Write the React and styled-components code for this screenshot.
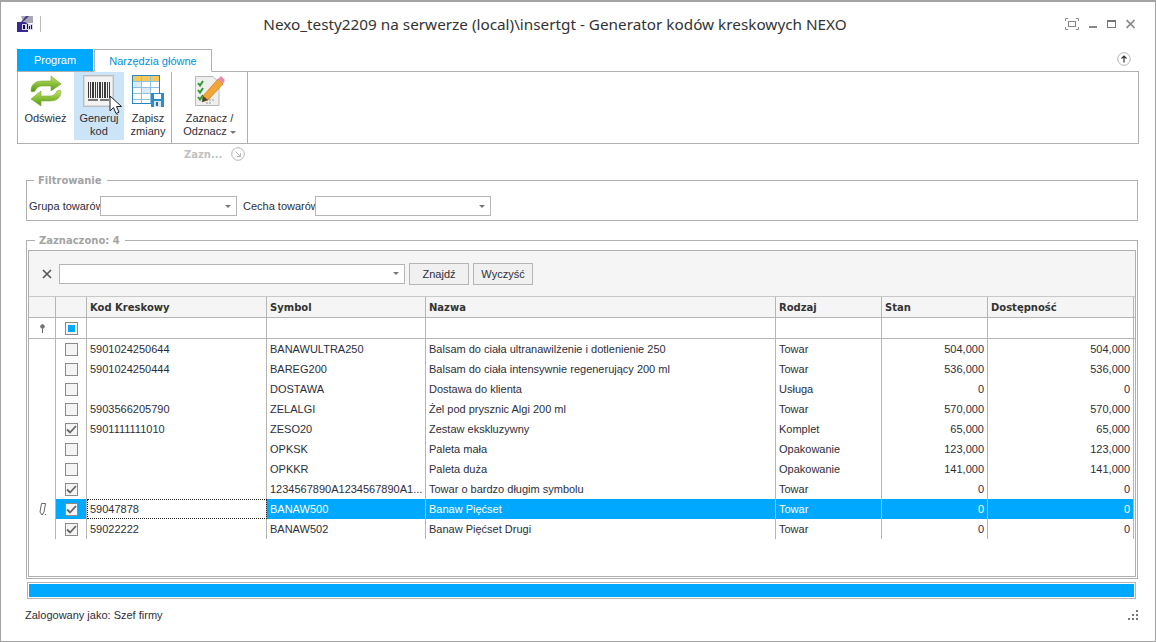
import styled, { createGlobalStyle } from 'styled-components';

const rows = [
  { code: '5901024250644', symbol: 'BANAWULTRA250', name: 'Balsam do ciała ultranawilżenie i dotlenienie 250', kind: 'Towar', stock: '504,000', avail: '504,000' },
  { code: '5901024250444', symbol: 'BAREG200', name: 'Balsam do ciała intensywnie regenerujący 200 ml', kind: 'Towar', stock: '536,000', avail: '536,000' },
  { code: '', symbol: 'DOSTAWA', name: 'Dostawa do klienta', kind: 'Usługa', stock: '0', avail: '0' },
  { code: '5903566205790', symbol: 'ZELALGI', name: 'Żel pod prysznic Algi 200 ml', kind: 'Towar', stock: '570,000', avail: '570,000' },
  { code: '5901111111010', symbol: 'ZESO20', name: 'Zestaw ekskluzywny', kind: 'Komplet', stock: '65,000', avail: '65,000', checked: true },
  { code: '', symbol: 'OPKSK', name: 'Paleta mała', kind: 'Opakowanie', stock: '123,000', avail: '123,000' },
  { code: '', symbol: 'OPKKR', name: 'Paleta duża', kind: 'Opakowanie', stock: '141,000', avail: '141,000' },
  { code: '', symbol: '1234567890A1234567890A1...', name: 'Towar o bardzo długim symbolu', kind: 'Towar', stock: '0', avail: '0', checked: true },
  { code: '59047878', symbol: 'BANAW500', name: 'Banaw Pięćset', kind: 'Towar', stock: '0', avail: '0', checked: true, active: true },
  { code: '59022222', symbol: 'BANAW502', name: 'Banaw Pięćset Drugi', kind: 'Towar', stock: '0', avail: '0', checked: true },
];

export default function App() {
  return (
    <>
      <GlobalStyle />
      <Window>
        <TitleBar>
          <AppLogo />
          <LogoDivider />
          <Title>Nexo_testy2209 na serwerze (local)\insertgt - Generator kodów kreskowych NEXO</Title>
          <WindowButtons>
            <svg width="14" height="12" viewBox="0 0 14 12" fill="none" stroke="#888">
              <path d="M.5 3V.5H3M11 .5h2.500V3M.5 9v2.500H3M11 11.500h2.500V9" />
              <rect x="3.500" y="3.500" width="7" height="5" />
            </svg>
            <svg width="8" height="12" viewBox="0 0 8 12"><rect y="8" width="8" height="2" fill="#888" /></svg>
            <svg width="9" height="12" viewBox="0 0 9 12" fill="none" stroke="#777">
              <rect x=".5" y="2.500" width="8" height="7" /><path d="M0 3.500h9" />
            </svg>
            <svg width="9" height="12" viewBox="0 0 9 12" fill="none" stroke="#888" strokeWidth="1.600">
              <path d="M.5 2l8 8M8.500 2l-8 8" />
            </svg>
          </WindowButtons>
        </TitleBar>

        <Tabs>
          <ProgramTab>Program</ProgramTab>
          <HomeTab>Narzędzia główne</HomeTab>
          <CollapseButton>
            <svg width="14" height="14" viewBox="0 0 14 14" fill="none">
              <circle cx="7" cy="7" r="6.300" stroke="#b5b5b5" />
              <path d="M7 10.500V4M4.500 6.500L7 4l2.500 2.500" stroke="#333" strokeWidth="1.200" />
            </svg>
          </CollapseButton>
        </Tabs>

        <Ribbon>
          <RibbonGroup $width={153}>
            <RibbonButton $width={55}>
              <RefreshIcon />
              <span>Odśwież</span>
            </RibbonButton>
            <RibbonButton $width={50} $hover>
              <BarcodeIcon />
              <span>Generuj<br />kod</span>
              <Cursor />
            </RibbonButton>
            <RibbonButton $width={46}>
              <TableIcon />
              <span>Zapisz<br />zmiany</span>
            </RibbonButton>
          </RibbonGroup>
          <RibbonGroup $width={75}>
            <RibbonButton $width={75}>
              <ChecklistIcon />
              <span>Zaznacz /<br />Odznacz <Caret /></span>
            </RibbonButton>
          </RibbonGroup>
        </Ribbon>

        <GroupCaption>
          <CaptionText>Zazn...</CaptionText>
          <svg width="14" height="14" viewBox="0 0 14 14" fill="none" stroke="#b5b5b5">
            <circle cx="7" cy="7" r="6.300" />
            <path d="M4.500 4.500l5 5M9.500 6v3.500H6" />
          </svg>
        </GroupCaption>

        <FilterBox>
          <Legend>Filtrowanie</Legend>
          <FilterRow>
            <FilterLabel $width={71}>Grupa towarów</FilterLabel>
            <Combo $width={137} />
            <FilterLabel $width={72} $gap={6}>Cecha towarów</FilterLabel>
            <Combo $width={176} />
          </FilterRow>
        </FilterBox>

        <SelectedBox>
          <Legend>Zaznaczono: 4</Legend>
          <GridPanel>
            <SearchBar>
              <svg width="10" height="10" viewBox="0 0 10 10" stroke="#555" strokeWidth="1.600">
                <path d="M1 1l8 8M9 1l-8 8" />
              </svg>
              <Combo $width={346} />
              <FlatButton>Znajdź</FlatButton>
              <FlatButton>Wyczyść</FlatButton>
            </SearchBar>

            <HeaderRow>
              <HeadCell />
              <HeadCell />
              <HeadCell>Kod Kreskowy</HeadCell>
              <HeadCell>Symbol</HeadCell>
              <HeadCell>Nazwa</HeadCell>
              <HeadCell>Rodzaj</HeadCell>
              <HeadCell>Stan</HeadCell>
              <HeadCell>Dostępność</HeadCell>
            </HeaderRow>

            <AutoFilterRow>
              <Cell $center>
                <svg width="7" height="9" viewBox="0 0 7 9" fill="#777" stroke="#666">
                  <circle cx="3.500" cy="2.500" r="1.800" /><path d="M3.500 4.500V9" />
                </svg>
              </Cell>
              <Cell $center><Check $partial /></Cell>
              <Cell /><Cell /><Cell /><Cell /><Cell /><Cell />
            </AutoFilterRow>

            {rows.map((row) => (
              <DataRow key={row.symbol}>
                <Cell $center>{row.active && <PencilMark />}</Cell>
                <Cell $center $active={row.active}><Check $checked={row.checked} /></Cell>
                <Cell $focused={row.active}>{row.code}</Cell>
                <Cell $active={row.active}>{row.symbol}</Cell>
                <Cell $active={row.active}>{row.name}</Cell>
                <Cell $active={row.active}>{row.kind}</Cell>
                <Cell $active={row.active} $right>{row.stock}</Cell>
                <Cell $active={row.active} $right>{row.avail}</Cell>
              </DataRow>
            ))}
          </GridPanel>
        </SelectedBox>

        <ProgressBox><ProgressFill style={{ width: '100%' }} /></ProgressBox>

        <StatusBar>
          <span>Zalogowany jako: Szef firmy</span>
          <svg width="12" height="11" viewBox="0 0 12 11" fill="#777">
            <rect x="9" y="0" width="2" height="2" />
            <rect x="5" y="4" width="2" height="2" /><rect x="9" y="4" width="2" height="2" />
            <rect x="1" y="8" width="2" height="2" /><rect x="5" y="8" width="2" height="2" /><rect x="9" y="8" width="2" height="2" />
          </svg>
        </StatusBar>
      </Window>
    </>
  );
}

function AppLogo() {
  return (
    <svg width="16" height="16" viewBox="0 0 16 16">
      <rect width="16" height="16" fill="#fff" />
      <path d="M4 0h12v7H9L6 5z" fill="#a9a5b8" />
      <path d="M9 0l3 0-6 6H4z" fill="#4a3f7a" />
      <path d="M0 6h8l3 2v8H0z" fill="#3a2a90" />
      <rect x="5" y="8" width="11" height="6" fill="#d8d5ea" />
      <path d="M6 9h2v4H6zM10 8h1v5h-1zM12 10h1v3h-1zM14 9h1v4h-1z" fill="#1a1050" />
    </svg>
  );
}

function RefreshIcon() {
  return (
    <svg width="32" height="32" viewBox="0 0 32 32">
      <defs>
        <linearGradient id="refreshGreen" x1="0" y1="0" x2="0" y2="1">
          <stop offset="0" stopColor="#c4e264" />
          <stop offset="1" stopColor="#4f9a12" />
        </linearGradient>
      </defs>
      <path d="M1 16C1 9 6 6 12 6h9V1l10 8-10 7v-5h-8c-4 0-6 1-8 5-1 1-4 1-4 0z" fill="url(#refreshGreen)" stroke="#79ab2c" strokeWidth=".6" />
      <path d="M31 16c0 7-5 10-11 10h-9v5L1 24l10-8v5h8c4 0 6-1 8-5 1-1 4-1 4 0z" fill="url(#refreshGreen)" stroke="#79ab2c" strokeWidth=".6" />
    </svg>
  );
}

function BarcodeIcon() {
  const bars = [0, 2, 4, 5, 7, 9, 11, 12, 14, 16, 17, 19, 21];
  return (
    <svg width="32" height="32" viewBox="0 0 32 32">
      <rect x=".5" y=".5" width="30" height="31" fill="#dcdcdc" stroke="#bdbdbd" />
      <rect x="2" y="2" width="27" height="28" fill="#f3f3f3" />
      {bars.map((x) => (
        <rect key={x} x={5 + x} y="7" width="1" height="16" fill="#3a3a3a" />
      ))}
      <rect x="5" y="24" width="10" height="2" fill="#777" />
      <rect x="17" y="24" width="9" height="2" fill="#777" />
    </svg>
  );
}

function TableIcon() {
  return (
    <svg width="32" height="32" viewBox="0 0 32 32">
      <rect x=".5" y=".5" width="27" height="28" fill="#fff" stroke="#2a86c0" />
      <rect x="1" y="1" width="26" height="5" fill="#f5c85a" />
      <path d="M1 6.500h26M1 12.500h26M1 18.500h26M1 24.500h26M9.500 1v27M18.500 1v27" stroke="#8fc0e0" fill="none" />
      <rect x="2" y="7" width="7" height="5" fill="#dcecf7" />
      <rect x="10" y="13" width="8" height="5" fill="#dcecf7" />
      <rect x="19" y="18" width="13" height="14" fill="#2a8ecb" />
      <rect x="22" y="19" width="7" height="5" fill="#fff" />
      <rect x="22" y="26" width="7" height="6" fill="#d9e8f2" />
      <rect x="24" y="27" width="2" height="4" fill="#2a6c9c" />
    </svg>
  );
}

function ChecklistIcon() {
  return (
    <svg width="32" height="32" viewBox="0 0 32 32">
      <path d="M1.500 1.500H19l6 6V30.500H1.500z" fill="#efefef" stroke="#b8b8b8" />
      <path d="M4 8l2 2.500L9 6M4 15l2 2.500L9 13M4 22l2 2.500L9 20" fill="none" stroke="#2f9a2f" strokeWidth="2" />
      <path d="M12 25h9M12 28h6" stroke="#999" strokeDasharray="2 1" />
      <path d="M9 21L24 4l5 5-15 16-6 2z" fill="#f2a635" stroke="#c67a1c" strokeWidth=".7" />
      <path d="M24 4l3-3 4 4-2 4z" fill="#e58ab0" />
      <path d="M8 27l1-6 5 4z" fill="#444" />
    </svg>
  );
}

function Cursor() {
  return (
    <CursorSvg width="14" height="20" viewBox="0 0 14 20">
      <path d="M1 1v15l3.500-3.500L7 18.500l3-1.300-2.500-5.700H12.500z" fill="#fff" stroke="#222" strokeWidth="1" />
    </CursorSvg>
  );
}

function PencilMark() {
  return (
    <svg width="9" height="13" viewBox="0 0 9 13" fill="none" stroke="#666">
      <path d="M3.500.5h4L6 9 4 12 2 9z" />
      <path d="M7 11.500h1" />
    </svg>
  );
}

function Check({ $checked, $partial }) {
  return (
    <CheckBox>
      {$partial && <CheckDot />}
      {$checked && (
        <svg width="11" height="9" viewBox="0 0 11 9" fill="none" stroke="#666" strokeWidth="1.800">
          <path d="M1 4.500L4 7.500 10 1" />
        </svg>
      )}
    </CheckBox>
  );
}

function Combo({ $width }) {
  return (
    <ComboBox $width={$width}>
      <Caret />
    </ComboBox>
  );
}

const GlobalStyle = createGlobalStyle`
  html, body {
    margin: 0;
    padding: 0;
    background: #fff;
  }
  body {
    font-family: "Liberation Sans", Arial, sans-serif;
    font-size: 11px;
    color: #2e2e3a;
  }
`;

const Window = styled.div`
  width: 1156px;
  height: 642px;
  box-sizing: border-box;
  border: 1px solid #a3a3a3;
  border-top-width: 2px;
  padding: 0 16px;
  overflow: hidden;
`;

const TitleBar = styled.div`
  height: 47px;
  display: flex;
  align-items: center;
  padding-bottom: 4px;
  box-sizing: border-box;
`;

const LogoDivider = styled.div`
  width: 1px;
  height: 16px;
  background: #bbb;
  margin-left: 7px;
`;

const Title = styled.div`
  flex: 1;
  text-align: center;
  font-family: "Noto Sans", sans-serif;
  font-size: 15.300px;
  color: #333;
  padding-left: 4px;
`;

const WindowButtons = styled.div`
  display: flex;
  align-items: center;
  gap: 10px;
  margin-right: 4px;
`;

const Tabs = styled.div`
  display: flex;
  height: 22px;
  align-items: flex-end;
  position: relative;
`;

const ProgramTab = styled.div`
  width: 76px;
  height: 22px;
  background: #00a8ff;
  color: #fff;
  display: flex;
  align-items: center;
  justify-content: center;
  margin-right: 1px;
`;

const HomeTab = styled.div`
  width: 118px;
  height: 23px;
  box-sizing: border-box;
  border: 1px solid #b0b0b0;
  border-bottom: 1px solid #fff;
  color: #0090e0;
  background: #fff;
  display: flex;
  align-items: center;
  justify-content: center;
  margin-bottom: -1px;
  z-index: 1;
`;

const CollapseButton = styled.div`
  position: absolute;
  right: 8px;
  top: 3px;
  line-height: 0;
`;

const Ribbon = styled.div`
  width: 1122px;
  height: 73px;
  box-sizing: border-box;
  border: 1px solid #b0b0b0;
  display: flex;
`;

const RibbonGroup = styled.div`
  width: ${(p) => p.$width}px;
  box-sizing: content-box;
  border-right: 1px solid #b0b0b0;
  display: flex;
  gap: 1px;
`;

const RibbonButton = styled.div`
  width: ${(p) => p.$width}px;
  height: 68px;
  position: relative;
  display: flex;
  flex-direction: column;
  align-items: center;
  text-align: center;
  padding-top: 3px;
  box-sizing: border-box;
  gap: 5px;
  line-height: 13px;
  background: ${(p) => (p.$hover ? '#cce4f7' : 'transparent')};
`;

const CursorSvg = styled.svg`
  position: absolute;
  left: 35px;
  top: 23px;
`;

const Caret = styled.i`
  display: inline-block;
  width: 0;
  height: 0;
  border: 3px solid transparent;
  border-top: 3px solid #777;
  border-bottom: 0;
  vertical-align: middle;
`;

const GroupCaption = styled.div`
  height: 20px;
  display: flex;
  align-items: center;
  padding-left: 167px;
  gap: 4px;
`;

const CaptionText = styled.span`
  width: 43px;
  font-family: "DejaVu Sans", sans-serif;
  font-size: 10px;
  color: #c0c0c0;
  font-weight: bold;
`;

const FilterBox = styled.fieldset`
  width: 1112px;
  height: 48px;
  margin: 9px 0 0 9px;
  padding: 0;
  box-sizing: border-box;
  border: 1px solid #b0b0b0;
`;

const Legend = styled.legend`
  margin-left: 7px;
  padding: 2px 5px 0 4px;
  font-family: "DejaVu Sans", sans-serif;
  font-size: 10px;
  color: #a3a3a3;
  font-weight: bold;
  line-height: 12px;
`;

const FilterRow = styled.div`
  display: flex;
  align-items: center;
  padding: 9px 0 0 2px;
`;

const FilterLabel = styled.span`
  width: ${(p) => p.$width}px;
  margin-left: ${(p) => p.$gap || 0}px;
  white-space: nowrap;
`;

const ComboBox = styled.div`
  width: ${(p) => p.$width}px;
  height: 20px;
  box-sizing: border-box;
  border: 1px solid #b5b5b5;
  background: #fff;
  display: flex;
  align-items: center;
  justify-content: flex-end;
  padding-right: 5px;
`;

const SelectedBox = styled.fieldset`
  width: 1112px;
  height: 346px;
  margin: 12px 0 0 9px;
  padding: 0 1px 1px;
  box-sizing: border-box;
  border: 1px solid #b0b0b0;
  min-width: 0;
`;

const GridPanel = styled.div`
  height: 327px;
  box-sizing: border-box;
  border: 1px solid #b0b0b0;
  margin-top: 3px;
`;

const SearchBar = styled.div`
  height: 46px;
  background: #f5f5f5;
  border-bottom: 1px solid #c8c8c8;
  box-sizing: border-box;
  display: flex;
  align-items: center;
  padding-left: 13px;
  gap: 4px;

  & > svg {
    margin-right: 3px;
  }
`;

const FlatButton = styled.div`
  width: 60px;
  height: 22px;
  box-sizing: border-box;
  border: 1px solid #b5b5b5;
  background: #f0f0f0;
  display: flex;
  align-items: center;
  justify-content: center;
`;

const columns = '27px 31px 180px 159px 350px 106px 106px 146px';

const HeaderRow = styled.div`
  display: grid;
  grid-template-columns: ${columns};
  height: 20px;
  background: #f5f5f5;
  border-bottom: 1px solid #b5b5b5;
`;

const HeadCell = styled.div`
  border-right: 1px solid #b5b5b5;
  padding-left: 3px;
  font-family: "DejaVu Sans", sans-serif;
  font-size: 10px;
  font-weight: bold;
  display: flex;
  align-items: center;
  color: #333;
  box-sizing: border-box;
`;

const DataRow = styled.div`
  display: grid;
  grid-template-columns: ${columns};
  height: 20px;
`;

const AutoFilterRow = styled(DataRow)`
  border-bottom: 1px solid #b5b5b5;
`;

const Cell = styled.div`
  box-sizing: border-box;
  border-right: 1px solid #b5b5b5;
  padding: 0 3px;
  display: flex;
  align-items: center;
  white-space: nowrap;
  overflow: hidden;
  justify-content: ${(p) => (p.$center ? 'center' : p.$right ? 'flex-end' : 'flex-start')};
  background: ${(p) => (p.$active ? '#00a8ff' : '#fff')};
  color: ${(p) => (p.$active ? '#fff' : 'inherit')};
  ${(p) => p.$focused && 'outline: 1px dotted #222; outline-offset: -1px;'}
`;

const CheckBox = styled.div`
  width: 13px;
  height: 13px;
  box-sizing: border-box;
  border: 1px solid #8a8a8a;
  background: #f4f4f4;
  display: flex;
  align-items: center;
  justify-content: center;
`;

const CheckDot = styled.div`
  width: 7px;
  height: 7px;
  background: #00a8ff;
`;

const ProgressBox = styled.div`
  width: 1109px;
  height: 17px;
  box-sizing: border-box;
  border: 1px solid #b5b5b5;
  padding: 1px;
  margin: 3px 0 0 10px;
`;

const ProgressFill = styled.div`
  height: 100%;
  background: #00a8ff;
`;

const StatusBar = styled.div`
  height: 30px;
  display: flex;
  align-items: center;
  justify-content: space-between;
  padding: 2px 0 0 8px;
  width: 1122px;
  box-sizing: border-box;
`;
